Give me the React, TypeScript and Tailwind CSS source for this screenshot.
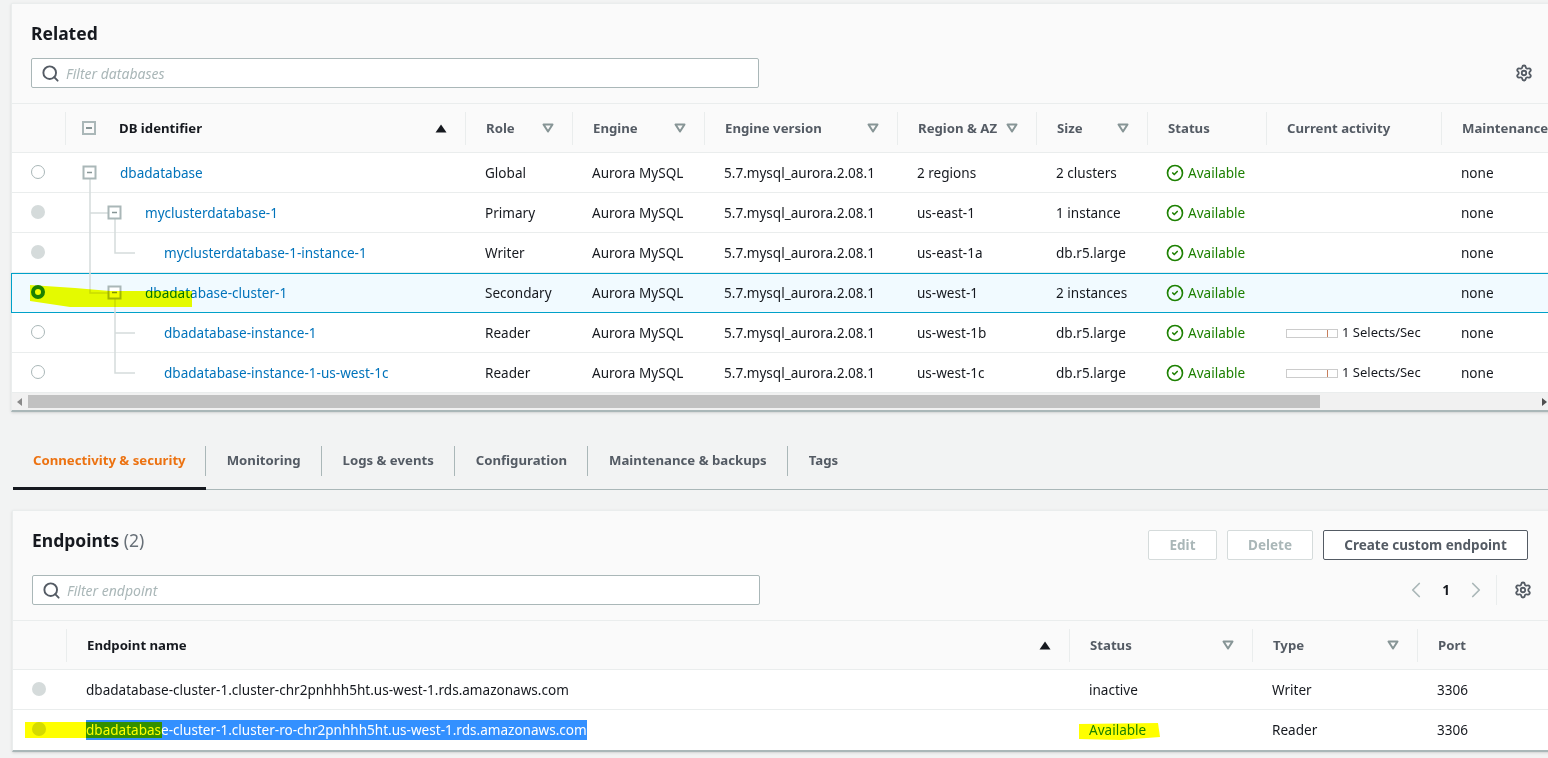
import { CircleCheck, ChevronLeft, ChevronRight, Search, Settings } from "lucide-react"

const dbCols = ["w-[107px]", "w-[132px]", "w-[193px]", "w-[139px]", "w-[111px]", "w-[119px]", "w-[175px]", "w-[160px]"]

const dbHeaders = ["Role", "Engine", "Engine version", "Region & AZ", "Size", "Status", "Current activity", "Maintenance"]

const dbRows = [
  { name: "dbadatabase", pad: "pl-[54px]", radio: "empty", role: "Global", version: "5.7.mysql_aurora.2.08.1", region: "2 regions", size: "2 clusters" },
  { name: "myclusterdatabase-1", pad: "pl-[79px]", radio: "disabled", role: "Primary", version: "5.7.mysql_aurora.2.08.1", region: "us-east-1", size: "1 instance" },
  { name: "myclusterdatabase-1-instance-1", pad: "pl-[98px]", radio: "disabled", role: "Writer", version: "5.7.mysql_aurora.2.08.1", region: "us-east-1a", size: "db.r5.large" },
  { name: "dbadatabase-cluster-1", pad: "pl-[79px]", radio: "selected", role: "Secondary", version: "5.7.mysql_aurora.2.08.1", region: "us-west-1", size: "2 instances" },
  { name: "dbadatabase-instance-1", pad: "pl-[98px]", radio: "empty", role: "Reader", version: "5.7.mysql_aurora.2.08.1", region: "us-west-1b", size: "db.r5.large", activity: true },
  { name: "dbadatabase-instance-1-us-west-1c", pad: "pl-[98px]", radio: "empty", role: "Reader", version: "5.7.mysql_aurora.2.08.1", region: "us-west-1c", size: "db.r5.large", activity: true },
]

const tabs = ["Connectivity & security", "Monitoring", "Logs & events", "Configuration", "Maintenance & backups", "Tags"]

function Radio({ kind }: { kind: string }) {
  if (kind === "selected") return <span className="block w-[14px] h-[14px] rounded-full border-[4px] border-[#1d8102] bg-white" />
  if (kind === "disabled") return <span className="block w-[14px] h-[14px] rounded-full bg-[#d5dbdb]" />
  return <span className="block w-[14px] h-[14px] rounded-full border border-[#aab7b8] bg-white" />
}

function FilterCaret() {
  return (
    <svg width="12" height="10" viewBox="0 0 12 10" className="shrink-0">
      <path d="M1.5 1.5h9L6 8.5z" fill="none" stroke="#879596" strokeWidth="2" strokeLinejoin="round" />
    </svg>
  )
}

function SortCaret() {
  return (
    <svg width="12" height="9" viewBox="0 0 12 9" className="shrink-0">
      <path d="M6 0.5 11.5 8.5H0.5z" fill="#16191f" />
    </svg>
  )
}

function FilterBox({ placeholder }: { placeholder: string }) {
  return (
    <div className="w-[728px] h-[30px] shrink-0 flex items-center gap-[6px] pl-[9px] bg-white border border-[#aab7b8] rounded-[2px]">
      <Search size={19} strokeWidth={2.4} className="text-[#545b64]" />
      <span className="italic text-[14px] text-[#aab7b8]">{placeholder}</span>
    </div>
  )
}

function TreeLines() {
  const box = (x: number, y: number) => (
    <g key={x + "-" + y}>
      <rect x={x} y={y} width="12" height="12" fill="#fff" stroke="#aab7b8" strokeWidth="2" />
      <path d={`M${x + 3.5} ${y + 6}h5`} stroke="#879596" strokeWidth="1.5" />
    </g>
  )
  return (
    <svg width="160" height="240" viewBox="0 0 160 240" className="absolute left-0 top-0 pointer-events-none">
      <path d="M78 25V140H96M78 60H96M103 65V100H123M103 145V220H123M103 180H123" fill="none" stroke="#d5dbdb" strokeWidth="1.5" />
      {box(71.5, 13.5)}
      {box(96.5, 53.5)}
      {box(96.5, 133.5)}
    </svg>
  )
}

function DatabasesPanel() {
  return (
    <div className="bg-white border-l border-t border-[#eaeded] border-b-2 border-b-[#aab7b8] w-[1700px] shadow-sm">
      <div className="bg-[#fafafa] h-[100px] border-b border-[#eaeded] pl-[19px] pt-[17px] flex flex-col">
        <h2 className="text-[17.5px] leading-[24px] font-bold text-[#16191f]">Related</h2>
        <div className="mt-[13px] flex items-center">
          <FilterBox placeholder="Filter databases" />
          <Settings size={18} strokeWidth={2.4} className="ml-[756px] text-[#545b64]" />
        </div>
      </div>
      <div className="flex h-[49px] bg-[#fafafa] border-b border-[#eaeded] items-center font-bold text-[13.2px] text-[#545b64]">
        <div className="w-[54px] h-[33px] border-r border-[#eaeded]" />
        <div className="w-[399px] flex items-center h-[33px] pl-[16px] pr-[18px] text-[#16191f]">
          <span className="w-[14px] h-[14px] border-2 border-[#aab7b8] flex items-center justify-center mr-[23px]">
            <span className="w-[6px] h-[1.5px] bg-[#879596]" />
          </span>
          <span className="flex-1 pt-[2px]">DB identifier</span>
          <SortCaret />
        </div>
        {dbHeaders.map((h, i) => (
          <div key={h} className={`${dbCols[i]} shrink-0 h-[33px] flex items-center justify-between pl-[20px] pr-[18px] border-l border-[#eaeded]`}>
            <span className="whitespace-nowrap pt-[2px]">{h}</span>
            {i < 5 && <FilterCaret />}
          </div>
        ))}
      </div>
      <div className="relative text-[13.55px]">
        {dbRows.map((r) => {
          const sel = r.radio === "selected"
          return (
            <div
              key={r.name}
              className={sel ? "flex h-[40px] items-center bg-[#f1faff] border border-[#00a1c9] -ml-px text-[#16191f]" : "flex h-[40px] pt-[1px] items-center border-b border-[#eaeded] text-[#16191f]"}
            >
              <div className={sel ? "w-[54px] shrink-0 pl-[19px] pb-[2px]" : "w-[54px] shrink-0 pl-[19px] pb-[3px]"}>
                <Radio kind={r.radio} />
              </div>
              <div className={`w-[399px] shrink-0 ${r.pad} text-[#0073bb]`}>{r.name}</div>
              <div className={`${dbCols[0]} shrink-0 pl-[20px]`}>{r.role}</div>
              <div className={`${dbCols[1]} shrink-0 pl-[20px]`}>Aurora MySQL</div>
              <div className={`${dbCols[2]} shrink-0 pl-[20px]`}>{r.version}</div>
              <div className={`${dbCols[3]} shrink-0 pl-[20px]`}>{r.region}</div>
              <div className={`${dbCols[4]} shrink-0 pl-[20px]`}>{r.size}</div>
              <div className={`${dbCols[5]} shrink-0 pl-[19px] flex items-center gap-[4px] text-[#1d8102]`}>
                <CircleCheck size={18} strokeWidth={2.2} />
                <span>Available</span>
              </div>
              <div className={`${dbCols[6]} shrink-0 pl-[20px] flex items-center gap-[4px] text-[13px]`}>
                {r.activity && (
                  <>
                    <span className="w-[52px] h-[9px] border border-[#cccccc] flex justify-end pr-[9px]">
                      <span className="w-px h-full bg-[#c77f5c]" />
                    </span>
                    <span className="whitespace-nowrap">1 Selects/Sec</span>
                  </>
                )}
              </div>
              <div className="pl-[20px]">none</div>
            </div>
          )
        })}
        <TreeLines />
      </div>
      <div className="h-[17px] bg-[#f1f1f1] flex items-center w-[1536px] relative">
        <svg width="6" height="8" viewBox="0 0 6 8" className="ml-[5px]">
          <path d="M5 0v8L0 4z" fill="#8a8a8a" />
        </svg>
        <div className="ml-[5px] w-[1292px] h-[13px] bg-[#c1c1c1]" />
        <svg width="6" height="8" viewBox="0 0 6 8" className="ml-auto mr-[1px]">
          <path d="M1 0v8l5-4z" fill="#505050" />
        </svg>
      </div>
    </div>
  )
}

function TabBar() {
  return (
    <div className="mt-[26px] ml-[2px] h-[52px] border-b border-[#aab7b8] flex w-[1700px] items-start font-bold text-[13.2px] text-[#545b64]">
      {tabs.map((t, i) => (
        <div key={t} className={i === 0 ? "h-[52px] flex items-start pt-[8px] border-b-[3px] border-[#16191f]" : "h-[52px] flex items-start pt-[8px]"}>
          <span
            className={
              (i === 0 ? "text-[#ec7211] pl-[20px] pr-[19px] " : "pl-[21px] pr-[20px] ") +
              (i < tabs.length - 1 ? "h-[30px] border-r border-[#aab7b8] flex items-center whitespace-nowrap pb-[1px]" : "h-[30px] flex items-center whitespace-nowrap pb-[1px]")
            }
          >
            {t}
          </span>
        </div>
      ))}
    </div>
  )
}

function EndpointsPanel() {
  return (
    <div className="mt-[20px] ml-px w-[1700px] bg-white border-l border-t border-[#eaeded] border-b-2 border-b-[#aab7b8] shadow-sm text-[13.55px]">
      <div className="h-[110px] bg-[#fafafa] border-b border-[#eaeded] pl-[19px] pt-[19px]">
        <div className="flex items-center h-[30px] w-[1496px]">
          <h2 className="text-[17.5px] font-bold text-[#16191f] pb-[10px]">
            Endpoints <span className="font-normal text-[#687078]">(2)</span>
          </h2>
          <div className="ml-auto flex gap-[10px] font-bold text-[13.5px]">
            <button className="h-[30px] w-[69px] border border-[#d5dbdb] rounded-[2px] bg-white text-[#aab7b8]">Edit</button>
            <button className="h-[30px] w-[86px] border border-[#d5dbdb] rounded-[2px] bg-white text-[#aab7b8]">Delete</button>
            <button className="h-[30px] w-[205px] border border-[#545b64] rounded-[2px] bg-white text-[#545b64]">Create custom endpoint</button>
          </div>
        </div>
        <div className="flex items-center mt-[15px] w-[1500px]">
          <FilterBox placeholder="Filter endpoint" />
          <div className="ml-auto flex items-center">
            <ChevronLeft size={26} strokeWidth={1.6} className="text-[#aab7b8]" />
            <span className="w-[34px] text-center font-bold text-[#16191f]">1</span>
            <ChevronRight size={26} strokeWidth={1.6} className="text-[#aab7b8]" />
            <span className="ml-[7px] h-[30px] border-l border-[#eaeded]" />
            <Settings size={18} strokeWidth={2.4} className="ml-[17px] text-[#545b64]" />
          </div>
        </div>
      </div>
      <div className="flex h-[49px] bg-[#fafafa] border-b border-[#eaeded] items-center font-bold text-[13.2px] text-[#545b64]">
        <div className="w-[54px] h-[33px] border-r border-[#eaeded]" />
        <div className="w-[1002px] h-[33px] flex items-center justify-between pl-[20px] pr-[18px] text-[#16191f]">
          <span className="pt-[2px]">Endpoint name</span>
          <SortCaret />
        </div>
        <div className="w-[183px] h-[33px] flex items-center justify-between pl-[20px] pr-[18px] border-l border-[#eaeded]">
          <span className="pt-[2px]">Status</span>
          <FilterCaret />
        </div>
        <div className="w-[165px] h-[33px] flex items-center justify-between pl-[20px] pr-[18px] border-l border-[#eaeded]">
          <span className="pt-[2px]">Type</span>
          <FilterCaret />
        </div>
        <div className="w-[120px] h-[33px] flex items-center pl-[20px] pt-[2px] border-l border-[#eaeded]">Port</div>
      </div>
      <div className="flex h-[40px] pt-[1px] items-center border-b border-[#eaeded] text-[#16191f]">
        <div className="w-[54px] pl-[19px] pb-[3px]">
          <Radio kind="disabled" />
        </div>
        <div className="w-[1002px] pl-[19px]">dbadatabase-cluster-1.cluster-chr2pnhhh5ht.us-west-1.rds.amazonaws.com</div>
        <div className="w-[183px] pl-[20px]">inactive</div>
        <div className="w-[165px] pl-[20px]">Writer</div>
        <div className="pl-[20px]">3306</div>
      </div>
      <div className="flex h-[40px] pt-[1px] items-center border-b border-transparent text-[#16191f]">
        <div className="w-[54px] pl-[19px] pb-[3px]">
          <Radio kind="disabled" />
        </div>
        <div className="w-[1002px] pl-[19px]">
          <span className="bg-[#3390ff] text-white leading-[20px] inline-block">dbadatabase-cluster-1.cluster-ro-chr2pnhhh5ht.us-west-1.rds.amazonaws.com</span>
        </div>
        <div className="w-[183px] pl-[20px] text-[#1d8102]">Available</div>
        <div className="w-[165px] pl-[20px]">Reader</div>
        <div className="pl-[20px]">3306</div>
      </div>
    </div>
  )
}

// yellow marker strokes someone drew on the screenshot
function Highlights() {
  return (
    <svg width="1548" height="758" viewBox="0 0 1548 758" className="absolute left-0 top-0 pointer-events-none mix-blend-multiply">
      <path d="M30 285 75 288 110 291H192V307H70L30 301z" fill="#f2ff00" />
      <path d="M25 722H162V738H25z" fill="#ffff00" />
      <path d="M1079 724 1158 723 1160 737 1120 740 1079 739z" fill="#ffff00" />
    </svg>
  )
}

export default function App() {
  return (
    <div className="relative w-[1548px] h-[758px] overflow-hidden bg-[#f2f3f3] pl-[11px] pt-[3px] text-[13.55px] font-['Noto_Sans','Open_Sans',sans-serif]">
      <DatabasesPanel />
      <TabBar />
      <EndpointsPanel />
      <Highlights />
    </div>
  )
}
